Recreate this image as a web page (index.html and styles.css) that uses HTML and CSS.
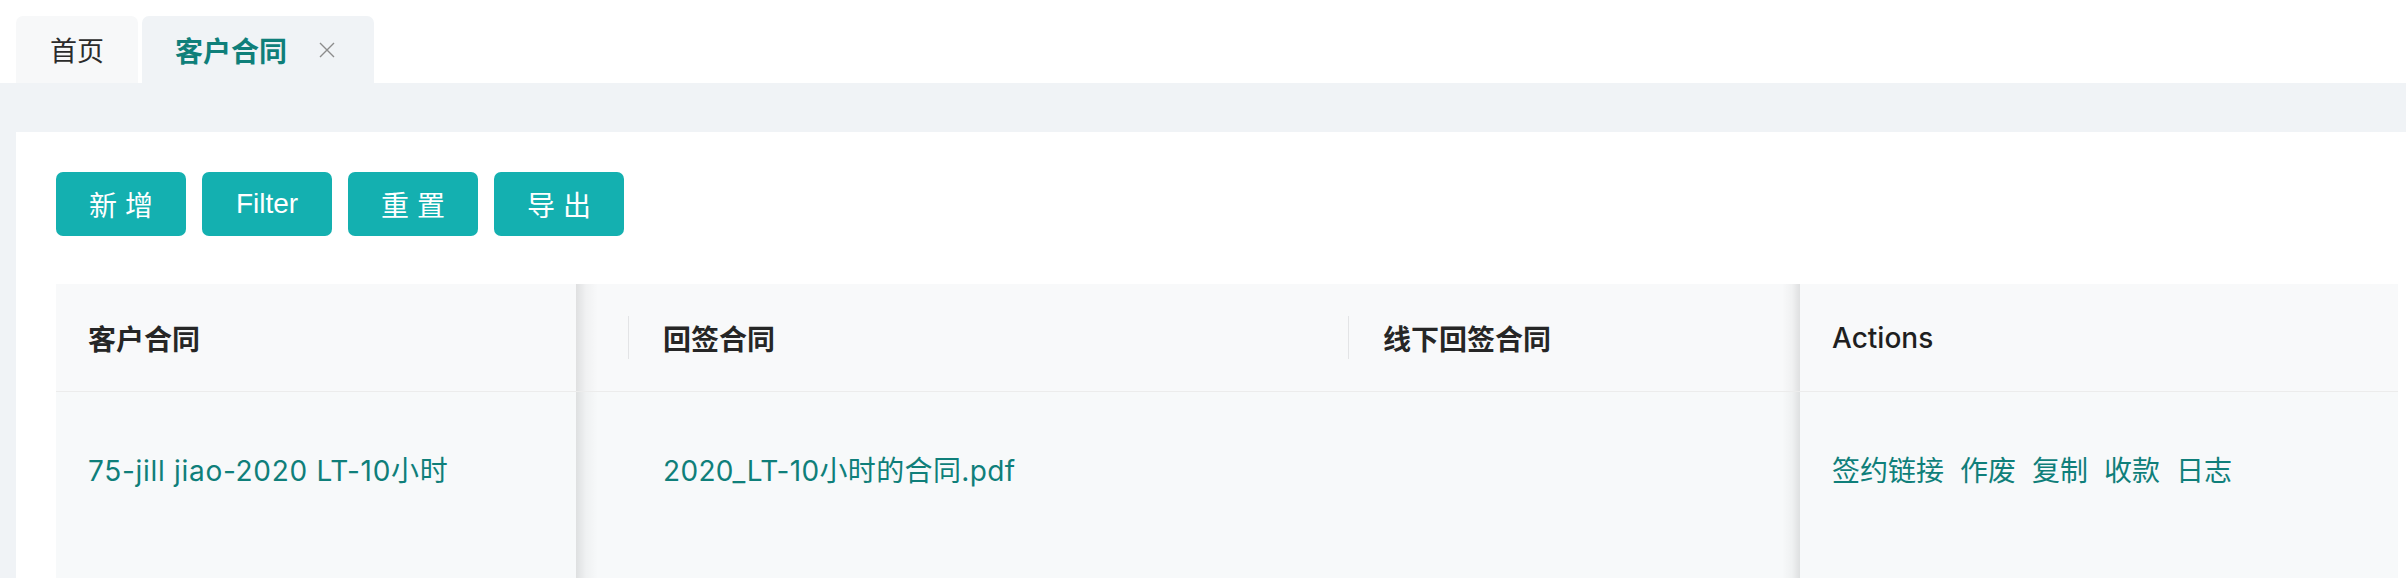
FILE: index.html
```html
<!DOCTYPE html>
<html lang="zh-CN">
<head>
<meta charset="utf-8">
<title>客户合同</title>
<link rel="stylesheet" href="styles.css">
</head>
<body>
<div class="tabbar">
  <div class="tab">首页</div>
  <div class="tab tab-active">客户合同
    <svg class="tab-close" viewBox="0 0 16 16" width="16" height="16"><path d="M1 1 L15 15 M15 1 L1 15" stroke="#8c8c8c" stroke-width="1.4" fill="none"/></svg>
  </div>
</div>
<div class="main">
  <div class="card">
    <div class="toolbar">
      <button class="btn">新 增</button>
      <button class="btn">Filter</button>
      <button class="btn">重 置</button>
      <button class="btn">导 出</button>
    </div>
    <div class="table">
      <div class="th fixed-left">客户合同</div>
      <div class="th th-narrow divided"></div>
      <div class="th divided">回签合同</div>
      <div class="th">线下回签合同</div>
      <div class="th fixed-right latin">Actions</div>

      <div class="td fixed-left"><a class="link link-wide">75-jill jiao-2020 LT-10小时</a></div>
      <div class="td td-narrow"></div>
      <div class="td"><a class="link link-file">2020_LT-10小时的合同.pdf</a></div>
      <div class="td"></div>
      <div class="td fixed-right actions">
        <a class="link">签约链接</a><a class="link">作废</a><a class="link">复制</a><a class="link">收款</a><a class="link">日志</a>
      </div>
    </div>
  </div>
</div>
</body>
</html>
```

FILE: styles.css
```css
html, body {
  margin: 0;
  padding: 0;
  height: 578px;
  overflow: hidden;
  background: #ffffff;
  font-family: "Inter", "Noto Sans CJK SC", sans-serif;
  color: #262626;
}

.tabbar {
  display: flex;
  gap: 4px;
  padding: 16px 0 0 16px;
  height: 67px;
  background: #ffffff;
}

.tab {
  display: flex;
  align-items: center;
  height: 67px;
  padding: 0 34px;
  border-radius: 7px 7px 0 0;
  background: #f7f8f9;
  font-family: "Noto Sans CJK SC", sans-serif;
  font-size: 27px;
  color: #2b2b2b;
  box-sizing: border-box;
}

.tab-active {
  width: 232px;
  padding: 0 0 0 33px;
  background: #f0f3f6;
  color: #0f7f7a;
  font-weight: 600;
  font-size: 28px;
}

.tab-close {
  margin-left: 32px;
  display: block;
}

.main {
  background: #f0f3f6;
  padding: 49px 0 0 16px;
}

.card {
  background: #ffffff;
  padding: 40px 8px 0 40px;
  height: 500px;
}

.toolbar {
  display: flex;
  gap: 16px;
  margin-bottom: 48px;
}

.btn {
  width: 130px;
  height: 64px;
  border: none;
  border-radius: 7px;
  background: #14b0b0;
  color: #ffffff;
  font-family: "Liberation Sans", "Noto Sans CJK SC", sans-serif;
  font-size: 28px;
  padding: 0;
  cursor: pointer;
}

.table {
  display: grid;
  grid-template-columns: 520px 53px 720px 451px 598px;
  background: #f7f9fa;
}

.th {
  position: relative;
  height: 108px;
  padding: 0 34px;
  display: flex;
  align-items: center;
  background: #f8f9fa;
  border-bottom: 1px solid #ececec;
  font-family: "Noto Sans CJK SC", sans-serif;
  font-size: 28px;
  font-weight: 600;
  color: #262626;
  box-sizing: border-box;
  min-width: 0;
}

.th.fixed-left,
.th.fixed-right { padding-left: 32px; }

.th-narrow,
.td-narrow { padding: 0; }

.th.latin {
  font-family: "Inter", "Noto Sans CJK SC", sans-serif;
  font-weight: 500;
  color: #1f1f1f;
}

.th.divided::after {
  content: "";
  position: absolute;
  right: 0;
  top: 32px;
  width: 1px;
  height: 43px;
  background: #e3e4e6;
}

.td {
  position: relative;
  height: 200px;
  padding: 64px 34px 0 34px;
  background: #f7f9fa;
  font-size: 28px;
  line-height: 30px;
  box-sizing: border-box;
  min-width: 0;
}

.td.fixed-left,
.td.fixed-right { padding-left: 32px; }

.td.td-narrow { padding: 0; }

.fixed-left, .fixed-right {
  z-index: 2;
}

.fixed-left::before {
  content: "";
  position: absolute;
  top: 0;
  bottom: 0;
  right: -22px;
  width: 22px;
  background: linear-gradient(to right, rgba(0,0,0,0.10), rgba(0,0,0,0.03) 45%, rgba(0,0,0,0));
  pointer-events: none;
}

.fixed-right::before {
  content: "";
  position: absolute;
  top: 0;
  bottom: 0;
  left: -18px;
  width: 18px;
  background: linear-gradient(to left, rgba(0,0,0,0.10), rgba(0,0,0,0.03) 45%, rgba(0,0,0,0));
  pointer-events: none;
}

.link {
  color: #0f7f7a;
  font-family: "Inter", "Noto Sans CJK SC", sans-serif;
  font-size: 28px;
  text-decoration: none;
  white-space: nowrap;
  cursor: pointer;
}

.link-wide { letter-spacing: 0.7px; }
.link-file { letter-spacing: 0.35px; }

.actions {
  display: flex;
  gap: 16px;
  align-items: flex-start;
}
```
